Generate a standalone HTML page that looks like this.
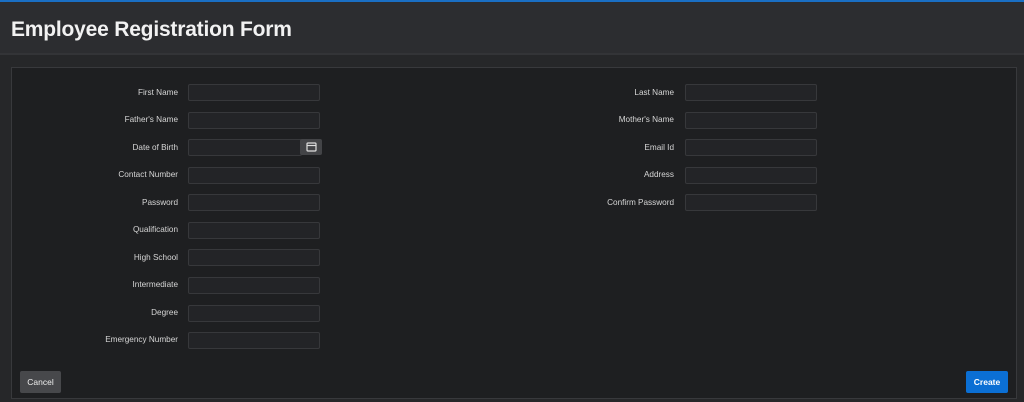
<!DOCTYPE html>
<html><head><style>
*{margin:0;padding:0;box-sizing:border-box}
body{width:1024px;height:402px;background:#262729;font-family:"Liberation Sans",sans-serif;position:relative;overflow:hidden}
.top{position:absolute;left:0;top:0;width:1024px;height:2px;background:#1a6fc4}
.hdr{position:absolute;left:0;top:2px;width:1024px;height:53px;background:#2c2d30;border-bottom:2px solid #333437}
.hdr h1{position:absolute;left:11px;top:16px;color:#f2f2f2;font-size:21px;font-weight:bold;letter-spacing:-0.2px}
.reg{position:absolute;left:11px;top:67px;width:1006px;height:332px;background:#1e1f21;border:1px solid #38393c}
.lbl{position:absolute;color:#d6d6d6;font-size:8.2px;text-align:right;width:200px;line-height:10px}
.inp{position:absolute;width:132px;height:17px;background:#232427;border:1px solid #37383b;border-radius:2px}
.cal{position:absolute;left:300px;width:22px;height:16px;background:#434447;border-radius:2px}
.btn{position:absolute;top:371px;height:22px;font-size:8.5px;color:#eee;text-align:center;line-height:22px;border-radius:2px}
</style></head><body>
<div class="top"></div>
<div class="hdr"><h1>Employee Registration Form</h1></div>
<div class="reg"></div>
<div class="lbl" style="left:-22px;top:88px">First Name</div><div class="inp" style="left:188px;top:84px"></div>
<div class="lbl" style="left:-22px;top:115px">Father's Name</div><div class="inp" style="left:188px;top:112px"></div>
<div class="lbl" style="left:-22px;top:143px">Date of Birth</div><div class="inp" style="left:188px;top:139px;width:114px"></div>
<div class="cal" style="top:139px"><svg width="22" height="16" viewBox="0 0 22 16"><rect x="7" y="4" width="9" height="8" rx="1" fill="none" stroke="#ddd" stroke-width="1.2"/><line x1="7" y1="6.5" x2="16" y2="6.5" stroke="#ddd" stroke-width="1.2"/></svg></div>
<div class="lbl" style="left:-22px;top:170px">Contact Number</div><div class="inp" style="left:188px;top:167px"></div>
<div class="lbl" style="left:-22px;top:198px">Password</div><div class="inp" style="left:188px;top:194px"></div>
<div class="lbl" style="left:-22px;top:225px">Qualification</div><div class="inp" style="left:188px;top:222px"></div>
<div class="lbl" style="left:-22px;top:253px">High School</div><div class="inp" style="left:188px;top:249px"></div>
<div class="lbl" style="left:-22px;top:280px">Intermediate</div><div class="inp" style="left:188px;top:277px"></div>
<div class="lbl" style="left:-22px;top:308px">Degree</div><div class="inp" style="left:188px;top:305px"></div>
<div class="lbl" style="left:-22px;top:335px">Emergency Number</div><div class="inp" style="left:188px;top:332px"></div>
<div class="lbl" style="left:474px;top:88px">Last Name</div><div class="inp" style="left:685px;top:84px"></div>
<div class="lbl" style="left:474px;top:115px">Mother's Name</div><div class="inp" style="left:685px;top:112px"></div>
<div class="lbl" style="left:474px;top:143px">Email Id</div><div class="inp" style="left:685px;top:139px"></div>
<div class="lbl" style="left:474px;top:170px">Address</div><div class="inp" style="left:685px;top:167px"></div>
<div class="lbl" style="left:474px;top:198px">Confirm Password</div><div class="inp" style="left:685px;top:194px"></div>
<div class="btn" style="left:20px;width:41px;background:#47484b">Cancel</div>
<div class="btn" style="left:966px;width:42px;background:#0b6fd4;font-weight:bold;color:#fff">Create</div>
</body></html>
